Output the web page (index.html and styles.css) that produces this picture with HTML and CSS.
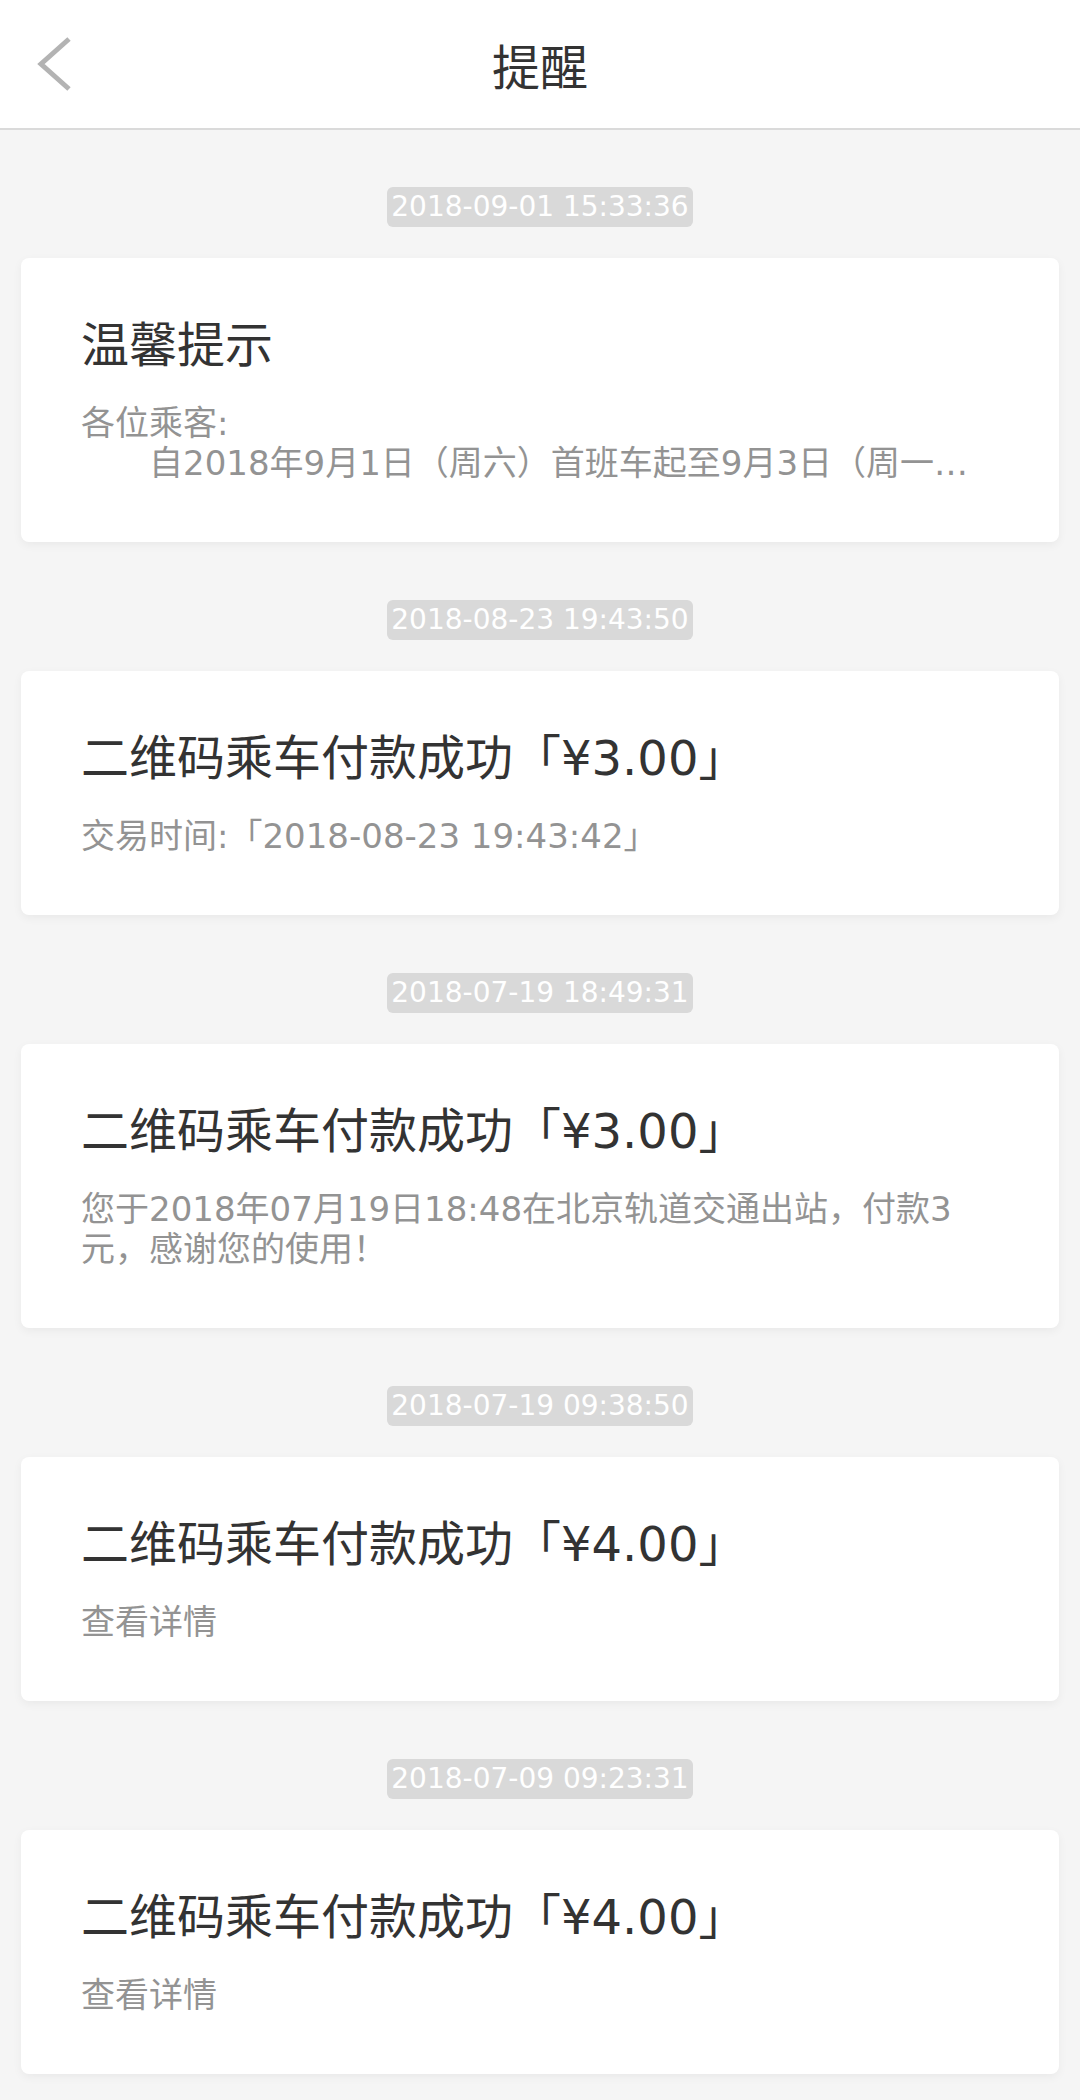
FILE: index.html
```html
<!DOCTYPE html>
<html lang="zh-CN">
<head>
    <meta charset="UTF-8">
    <meta name="viewport" content="width=device-width, initial-scale=1.0">
    <title>提醒</title>
    <link rel="stylesheet" href="styles.css">
</head>
<body>
    <header class="topbar">
        <a class="back" href="#" aria-label="返回">
            <svg width="40" height="58" viewBox="0 0 40 58">
                <polyline points="35,4 7,29 35,54" fill="none" stroke="#b3b3b3" stroke-width="5"/>
            </svg>
        </a>
        <h1 class="topbar-title">提醒</h1>
        <span></span>
    </header>

    <main class="feed">
        <section class="notice">
            <div class="notice-time">2018-09-01 15:33:36</div>
            <div class="notice-card">
                <h2 class="notice-title">温馨提示</h2>
                <p class="notice-text">各位乘客:</p>
                <p class="notice-text notice-text-indent">自2018年9月1日（周六）首班车起至9月3日（周一…</p>
            </div>
        </section>

        <section class="notice">
            <div class="notice-time">2018-08-23 19:43:50</div>
            <div class="notice-card">
                <h2 class="notice-title">二维码乘车付款成功「¥3.00」</h2>
                <p class="notice-text">交易时间:「2018-08-23 19:43:42」</p>
            </div>
        </section>

        <section class="notice">
            <div class="notice-time">2018-07-19 18:49:31</div>
            <div class="notice-card">
                <h2 class="notice-title">二维码乘车付款成功「¥3.00」</h2>
                <p class="notice-text">您于2018年07月19日18:48在北京轨道交通出站，付款3元，感谢您的使用！</p>
            </div>
        </section>

        <section class="notice">
            <div class="notice-time">2018-07-19 09:38:50</div>
            <div class="notice-card">
                <h2 class="notice-title">二维码乘车付款成功「¥4.00」</h2>
                <p class="notice-text">查看详情</p>
            </div>
        </section>

        <section class="notice">
            <div class="notice-time">2018-07-09 09:23:31</div>
            <div class="notice-card">
                <h2 class="notice-title">二维码乘车付款成功「¥4.00」</h2>
                <p class="notice-text">查看详情</p>
            </div>
        </section>
    </main>
</body>
</html>
```

FILE: styles.css
```css
body {
    margin: 0;
    font-family: "DejaVu Sans", "Noto Sans CJK SC", sans-serif;
    background-color: #f5f5f5;
    color: #333;
}
.topbar {
    display: grid;
    grid-template-columns: 1fr auto 1fr;
    align-items: center;
    height: 128px;
    background-color: #fff;
    border-bottom: 2px solid #dadada;
}
.back {
    display: flex;
    justify-self: start;
    margin-left: 34px;
}
.topbar-title {
    margin: 0;
    font-size: 48px;
    font-weight: normal;
    color: #333;
}
.feed {
    padding-bottom: 20px;
}
.notice-time {
    width: fit-content;
    margin: 58px auto 31px;
    padding: 0 4px;
    height: 40px;
    line-height: 40px;
    font-size: 28px;
    color: #fff;
    background-color: #d9d9d9;
    border-radius: 6px;
}
.notice:first-child .notice-time {
    margin-top: 57px;
}
.notice-card {
    margin: 0 21px;
    padding: 59px 84px 59px 60px;
    background-color: #fff;
    border-radius: 8px;
    box-shadow: 0 3px 10px rgba(0, 0, 0, 0.05);
}
.notice-title {
    margin: 0 0 30px;
    font-size: 48px;
    line-height: 56px;
    font-weight: normal;
    color: #333;
}
.notice-text {
    margin: 0;
    font-size: 34px;
    line-height: 40px;
    color: #939393;
}
.notice-text-indent {
    padding-left: 68px;
    white-space: nowrap;
    overflow: hidden;
    text-overflow: ellipsis;
}
```
